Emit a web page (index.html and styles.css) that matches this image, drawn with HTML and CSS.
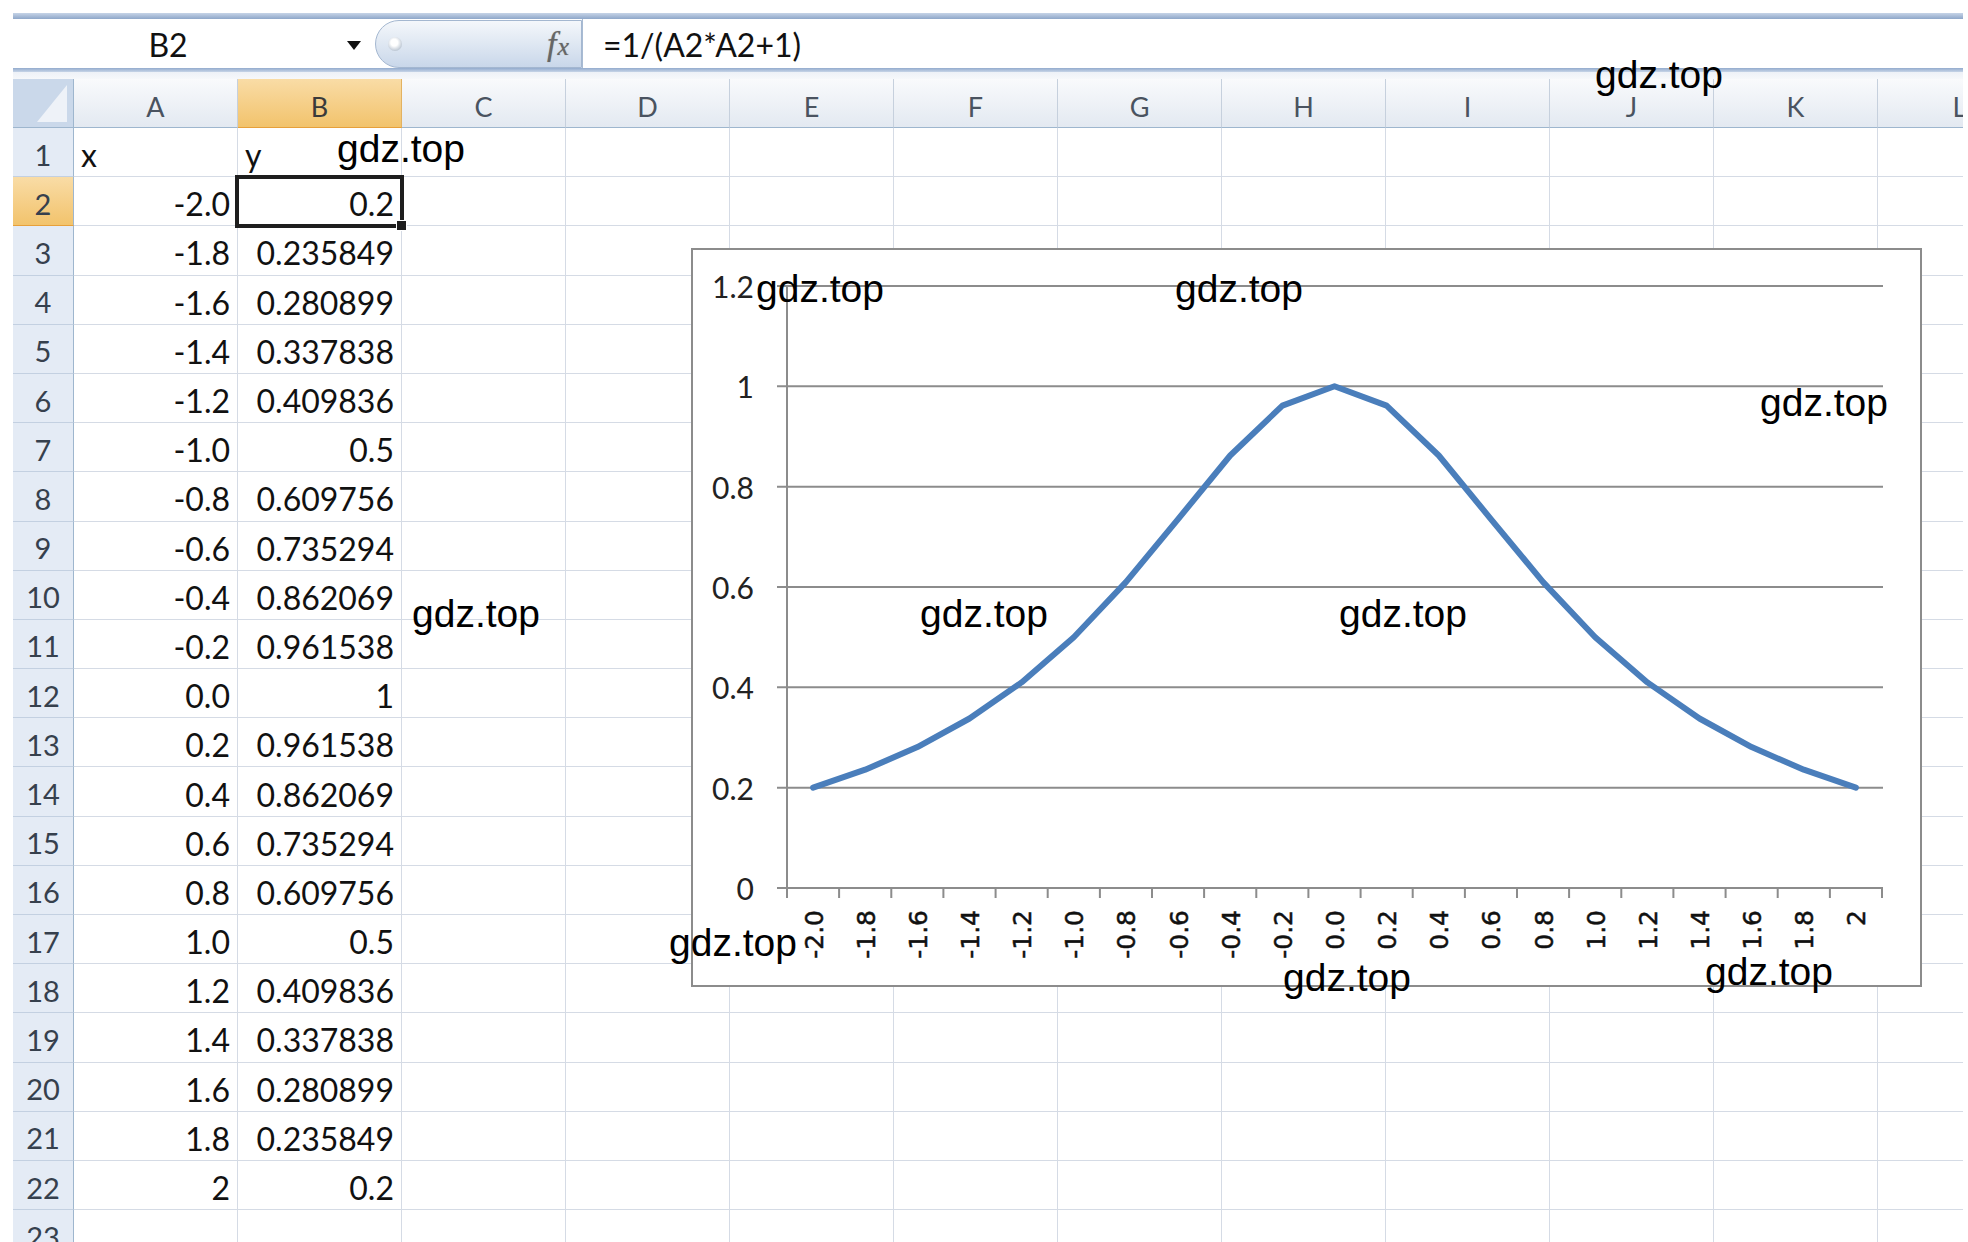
FILE: index.html
```html
<!DOCTYPE html>
<html>
<head>
<meta charset="utf-8">
<link rel="stylesheet" href="styles.css">
</head>
<body>
<div class="page">
  <div class="app">
    <div class="bar-top"></div>
    <div class="formula-bar">
      <div class="name-box"><span class="name">B2</span><span class="dd"></span></div>
      <div class="fx-pill"><span class="knob"></span><span class="fx"><span class="f">f</span><span class="x">x</span></span></div>
      <div class="formula">=1/(A2*A2+1)</div>
    </div>
    <div class="bar-bottom"></div>
    <div class="bar-gap"></div>
    <div class="sheet">
      <div class="hdr">
        <div class="corner"></div>
        <div class="ch">A</div><div class="ch sel">B</div><div class="ch">C</div><div class="ch">D</div><div class="ch">E</div><div class="ch">F</div><div class="ch">G</div><div class="ch">H</div><div class="ch">I</div><div class="ch">J</div><div class="ch">K</div><div class="ch">L</div>
      </div>
      <div class="row"><div class="rh">1</div><div class="cells"><div class="cell t">x</div><div class="cell t">y</div></div></div>
      <div class="row"><div class="rh sel">2</div><div class="cells"><div class="cell">-2.0</div><div class="cell sel">0.2</div></div></div>
      <div class="row"><div class="rh">3</div><div class="cells"><div class="cell">-1.8</div><div class="cell">0.235849</div></div></div>
      <div class="row"><div class="rh">4</div><div class="cells"><div class="cell">-1.6</div><div class="cell">0.280899</div></div></div>
      <div class="row"><div class="rh">5</div><div class="cells"><div class="cell">-1.4</div><div class="cell">0.337838</div></div></div>
      <div class="row"><div class="rh">6</div><div class="cells"><div class="cell">-1.2</div><div class="cell">0.409836</div></div></div>
      <div class="row"><div class="rh">7</div><div class="cells"><div class="cell">-1.0</div><div class="cell">0.5</div></div></div>
      <div class="row"><div class="rh">8</div><div class="cells"><div class="cell">-0.8</div><div class="cell">0.609756</div></div></div>
      <div class="row"><div class="rh">9</div><div class="cells"><div class="cell">-0.6</div><div class="cell">0.735294</div></div></div>
      <div class="row"><div class="rh">10</div><div class="cells"><div class="cell">-0.4</div><div class="cell">0.862069</div></div></div>
      <div class="row"><div class="rh">11</div><div class="cells"><div class="cell">-0.2</div><div class="cell">0.961538</div></div></div>
      <div class="row"><div class="rh">12</div><div class="cells"><div class="cell">0.0</div><div class="cell">1</div></div></div>
      <div class="row"><div class="rh">13</div><div class="cells"><div class="cell">0.2</div><div class="cell">0.961538</div></div></div>
      <div class="row"><div class="rh">14</div><div class="cells"><div class="cell">0.4</div><div class="cell">0.862069</div></div></div>
      <div class="row"><div class="rh">15</div><div class="cells"><div class="cell">0.6</div><div class="cell">0.735294</div></div></div>
      <div class="row"><div class="rh">16</div><div class="cells"><div class="cell">0.8</div><div class="cell">0.609756</div></div></div>
      <div class="row"><div class="rh">17</div><div class="cells"><div class="cell">1.0</div><div class="cell">0.5</div></div></div>
      <div class="row"><div class="rh">18</div><div class="cells"><div class="cell">1.2</div><div class="cell">0.409836</div></div></div>
      <div class="row"><div class="rh">19</div><div class="cells"><div class="cell">1.4</div><div class="cell">0.337838</div></div></div>
      <div class="row"><div class="rh">20</div><div class="cells"><div class="cell">1.6</div><div class="cell">0.280899</div></div></div>
      <div class="row"><div class="rh">21</div><div class="cells"><div class="cell">1.8</div><div class="cell">0.235849</div></div></div>
      <div class="row"><div class="rh">22</div><div class="cells"><div class="cell">2</div><div class="cell">0.2</div></div></div>
      <div class="row"><div class="rh">23</div><div class="cells"></div></div>
    </div>
  </div>

  <svg class="chart" width="1231" height="739" viewBox="691 248 1231 739" xmlns="http://www.w3.org/2000/svg">
    <rect x="692" y="249" width="1229" height="737" fill="#fff" stroke="#8c8c8c" stroke-width="2"/>
    <g stroke="#8c8c8c" stroke-width="2" fill="none">
      <line x1="777" x2="1883" y1="286" y2="286"/>
      <line x1="777" x2="1883" y1="386.3" y2="386.3"/>
      <line x1="777" x2="1883" y1="486.7" y2="486.7"/>
      <line x1="777" x2="1883" y1="587" y2="587"/>
      <line x1="777" x2="1883" y1="687.3" y2="687.3"/>
      <line x1="777" x2="1883" y1="787.7" y2="787.7"/>
      <line x1="777" x2="1883" y1="888" y2="888"/>
      <line x1="787" x2="787" y1="286" y2="888"/>
      <path d="M787 888v10M839.1 888v10M891.3 888v10M943.4 888v10M995.6 888v10M1047.7 888v10M1099.9 888v10M1152 888v10M1204.1 888v10M1256.3 888v10M1308.4 888v10M1360.6 888v10M1412.7 888v10M1464.9 888v10M1517 888v10M1569.1 888v10M1621.3 888v10M1673.4 888v10M1725.6 888v10M1777.7 888v10M1829.9 888v10M1882 888v10"/>
    </g>
    <polyline fill="none" stroke="#4a7ebb" stroke-width="6" stroke-linejoin="round" stroke-linecap="round"
      points="813.1,787.7 865.2,769.7 917.4,747.1 969.5,718.5 1021.6,682.4 1073.8,637.2 1125.9,582.1 1178.1,519.1 1230.2,455.5 1282.4,405.6 1334.5,386.3 1386.6,405.6 1438.8,455.5 1490.9,519.1 1543.1,582.1 1595.2,637.2 1647.4,682.4 1699.5,718.5 1751.6,747.1 1803.8,769.7 1855.9,787.7"/>
    <g class="ylab">
      <text x="754" y="286">1.2</text>
      <text x="754" y="386.3">1</text>
      <text x="754" y="486.7">0.8</text>
      <text x="754" y="587">0.6</text>
      <text x="754" y="687.3">0.4</text>
      <text x="754" y="787.7">0.2</text>
      <text x="754" y="888">0</text>
    </g>
    <g class="xlab">
      <text transform="translate(814.1 910) rotate(-90)">-2.0</text>
      <text transform="translate(866.2 910) rotate(-90)">-1.8</text>
      <text transform="translate(918.4 910) rotate(-90)">-1.6</text>
      <text transform="translate(970.5 910) rotate(-90)">-1.4</text>
      <text transform="translate(1022.6 910) rotate(-90)">-1.2</text>
      <text transform="translate(1074.8 910) rotate(-90)">-1.0</text>
      <text transform="translate(1126.9 910) rotate(-90)">-0.8</text>
      <text transform="translate(1179.1 910) rotate(-90)">-0.6</text>
      <text transform="translate(1231.2 910) rotate(-90)">-0.4</text>
      <text transform="translate(1283.4 910) rotate(-90)">-0.2</text>
      <text transform="translate(1335.5 910) rotate(-90)">0.0</text>
      <text transform="translate(1387.6 910) rotate(-90)">0.2</text>
      <text transform="translate(1439.8 910) rotate(-90)">0.4</text>
      <text transform="translate(1491.9 910) rotate(-90)">0.6</text>
      <text transform="translate(1544.1 910) rotate(-90)">0.8</text>
      <text transform="translate(1596.2 910) rotate(-90)">1.0</text>
      <text transform="translate(1648.4 910) rotate(-90)">1.2</text>
      <text transform="translate(1700.5 910) rotate(-90)">1.4</text>
      <text transform="translate(1752.6 910) rotate(-90)">1.6</text>
      <text transform="translate(1804.8 910) rotate(-90)">1.8</text>
      <text transform="translate(1856.9 910) rotate(-90)">2</text>
    </g>
  </svg>

  <span class="wm wm1">gdz.top</span>
  <span class="wm wm2">gdz.top</span>
  <span class="wm wm3">gdz.top</span>
  <span class="wm wm4">gdz.top</span>
  <span class="wm wm5">gdz.top</span>
  <span class="wm wm6">gdz.top</span>
  <span class="wm wm7">gdz.top</span>
  <span class="wm wm8">gdz.top</span>
  <span class="wm wm9">gdz.top</span>
  <span class="wm wm10">gdz.top</span>
  <span class="wm wm11">gdz.top</span>
</div>
</body>
</html>
```

FILE: styles.css
```css
* { box-sizing: border-box; }

body {
  margin: 0;
  background: #fff;
}

.page {
  position: relative;
  width: 1968px;
  height: 1242px;
  overflow: hidden;
  background: #fff;
  font-family: Lato, "Noto Sans", sans-serif;
}

.app {
  margin-left: 13px;
  padding-top: 13px;
  width: 1950px;
  height: 1242px;
  overflow: hidden;
}

/* ---------- formula bar ---------- */
.bar-top {
  height: 6px;
  background: linear-gradient(#c6d4e7, #8ea7c9);
}

.formula-bar {
  display: flex;
  height: 49px;
  background: #fff;
}

.bar-bottom {
  height: 4px;
  background: linear-gradient(#93abcd, #c6d4e7);
}

.bar-gap {
  height: 7px;
  background: linear-gradient(#edf1f7, #f6f8fb);
}

.name-box {
  width: 362px;
  flex: none;
  display: flex;
  align-items: center;
}

.name {
  width: 310px;
  text-align: center;
  font-size: 32px;
  line-height: 1;
  padding-top: 2px;
  color: #111;
}

.dd {
  margin-left: 24px;
  margin-top: 3px;
  width: 0;
  height: 0;
  border-left: 7.5px solid transparent;
  border-right: 7.5px solid transparent;
  border-top: 9px solid #111;
}

.fx-pill {
  width: 207px;
  height: 48px;
  margin-top: 1px;
  flex: none;
  display: flex;
  align-items: center;
  padding: 0 12px 0 12px;
  border: 1px solid #a4b7d0;
  border-radius: 24px 0 0 24px;
  background: linear-gradient(#f4f7fb 0%, #e1e9f3 45%, #c9d7ea 100%);
}

.knob {
  width: 14px;
  height: 14px;
  border-radius: 50%;
  background: radial-gradient(circle at 45% 40%, #ffffff 0 30%, #b9c4d1 75%, #a7b4c4 100%);
}

.fx {
  margin-left: auto;
  font-family: "Liberation Serif", "DejaVu Serif", serif;
  font-style: italic;
  color: #666;
  line-height: 1;
  display: flex;
  align-items: baseline;
  text-shadow: 0 0 1px #999;
}

.fx .f { font-size: 34px; }
.fx .x { font-size: 26px; margin-left: 1px; }

.formula {
  flex: 1;
  display: flex;
  align-items: center;
  padding-left: 20px;
  padding-top: 2px;
  border-left: 1px solid #a8bbd3;
  font-size: 32px;
  line-height: 1;
  color: #111;
}

/* ---------- sheet ---------- */
.sheet {
  width: max-content;
}

.hdr {
  display: flex;
  height: 49px;
}

.corner {
  position: relative;
  width: 61px;
  flex: none;
  background: #cad8ea;
  border-right: 1px solid #9eb6ce;
  border-bottom: 1px solid #9eb6ce;
}

.corner::after {
  content: "";
  position: absolute;
  left: 24px;
  top: 6px;
  width: 30px;
  height: 37px;
  background: #eef2f8;
  clip-path: polygon(100% 0, 100% 100%, 0 100%);
}

.ch {
  width: 164px;
  flex: none;
  display: flex;
  justify-content: center;
  align-items: center;
  padding-top: 6px;
  font-size: 27px;
  line-height: 1;
  color: #4a5360;
  background: linear-gradient(#f9fafc, #e3e9f1);
  border-right: 1px solid #c6d0dd;
  border-bottom: 1px solid #9eb6ce;
}

.ch.sel {
  background: linear-gradient(#f9dca6, #f2c36c);
  border-right-color: #e3b261;
  border-bottom-color: #e7a03a;
  color: #3a3a3a;
}

.row {
  display: flex;
  height: 49.2px;
}

.rh {
  width: 61px;
  flex: none;
  display: flex;
  justify-content: center;
  align-items: center;
  padding-top: 4px;
  font-size: 29px;
  line-height: 1;
  color: #36404d;
  background: #e4ebf5;
  border-right: 1px solid #9eb6ce;
  border-bottom: 1px solid #c3d0e1;
}

.rh.sel {
  background: linear-gradient(#f9dca6, #f2c36c);
  border-bottom-color: #e7a03a;
}

.cells {
  flex: 1;
  display: flex;
  border-bottom: 1px solid #d5dbe5;
  background-image: linear-gradient(90deg, transparent 163px, #d5dbe5 163px);
  background-size: 164px 100%;
  background-repeat: repeat-x;
}

.cell {
  width: 164px;
  flex: none;
  display: flex;
  align-items: center;
  justify-content: flex-end;
  padding: 6px 8px 0 7px;
  font-size: 32px;
  line-height: 1;
  color: #111;
}

.cell.t {
  justify-content: flex-start;
}

.cell.sel {
  position: relative;
}

.cell.sel::before {
  content: "";
  position: absolute;
  left: -3px;
  right: -2px;
  top: -2px;
  bottom: -3px;
  border: 4px solid #1e1e1e;
}

.cell.sel::after {
  content: "";
  position: absolute;
  right: -5px;
  bottom: -6px;
  width: 9px;
  height: 9px;
  background: #1e1e1e;
  border: 1px solid #fff;
}

/* ---------- chart ---------- */
.chart {
  position: absolute;
  left: 691px;
  top: 248px;
}

.ylab text {
  font-family: Lato, "Noto Sans", sans-serif;
  font-size: 30px;
  fill: #222;
  text-anchor: end;
  dominant-baseline: central;
}

.xlab text {
  font-family: "DejaVu Sans", Verdana, sans-serif;
  font-size: 25px;
  fill: #111;
  stroke: #111;
  stroke-width: 0.5px;
  text-anchor: end;
  dominant-baseline: central;
}

/* ---------- watermarks ---------- */
.wm {
  position: absolute;
  font-family: "Liberation Sans", Arial, sans-serif;
  font-size: 39px;
  line-height: 39px;
  color: #000;
  white-space: nowrap;
}

.wm1 { left: 337px; top: 129px; }
.wm2 { left: 1595px; top: 55px; }
.wm3 { left: 756px; top: 269px; }
.wm4 { left: 1175px; top: 269px; }
.wm5 { left: 1760px; top: 383px; }
.wm6 { left: 412px; top: 594px; }
.wm7 { left: 920px; top: 594px; }
.wm8 { left: 1339px; top: 594px; }
.wm9 { left: 669px; top: 923px; }
.wm10 { left: 1283px; top: 958px; }
.wm11 { left: 1705px; top: 952px; }
```
